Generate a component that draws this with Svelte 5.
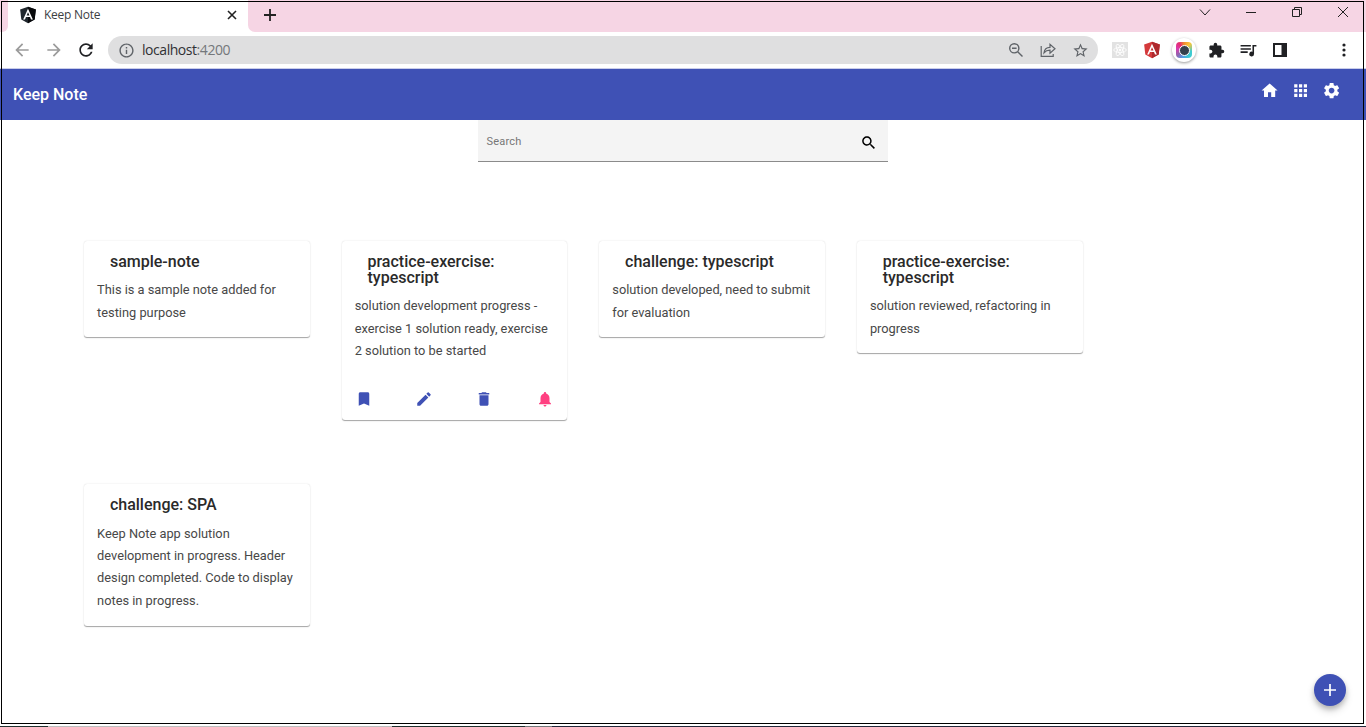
<script>
  const notes = [
    { title: 'sample-note', text: 'This is a sample note added for testing purpose' },
    {
      title: 'practice-exercise: typescript',
      text: 'solution development progress - exercise 1 solution ready, exercise 2 solution to be started',
      active: true,
    },
    { title: 'challenge: typescript', text: 'solution developed, need to submit for evaluation' },
    { title: 'practice-exercise: typescript', text: 'solution reviewed, refactoring in progress' },
    {
      title: 'challenge: SPA',
      text: 'Keep Note app solution development in progress. Header design completed. Code to display notes in progress.',
    },
  ];
  const paths = {
    bookmark: 'M17 3H7c-1.1 0-1.99.9-1.99 2L5 21l7-3 7 3V5c0-1.1-.9-2-2-2z',
    edit: 'M3 17.25V21h3.75L17.81 9.94l-3.75-3.75L3 17.25zM20.71 7.04a1 1 0 0 0 0-1.41l-2.34-2.34a1 1 0 0 0-1.41 0l-1.83 1.83 3.75 3.75 1.83-1.83z',
    remove: 'M6 19c0 1.1.9 2 2 2h8c1.1 0 2-.9 2-2V7H6v12zM19 4h-3.5l-1-1h-5l-1 1H5v2h14V4z',
    bell: 'M12 22c1.1 0 2-.9 2-2h-4c0 1.1.89 2 2 2zm6-6v-5c0-3.07-1.64-5.64-4.5-6.32V4c0-.83-.67-1.5-1.5-1.5s-1.5.67-1.5 1.5v.68C7.63 5.36 6 7.92 6 11v5l-2 2v1h16v-1l-2-2z',
    home: 'M10 20v-6h4v6h5v-8h3L12 3 2 12h3v8z',
    apps: 'M4 8h4V4H4v4zm6 12h4v-4h-4v4zm-6 0h4v-4H4v4zm0-6h4v-4H4v4zm6 0h4v-4h-4v4zm6-10v4h4V4h-4zm-6 4h4V4h-4v4zm6 6h4v-4h-4v4zm0 6h4v-4h-4v4z',
    settings:
      'M19.14 12.94c.04-.3.06-.61.06-.94 0-.32-.02-.64-.07-.94l2.03-1.58c.18-.14.23-.41.12-.61l-1.92-3.32c-.12-.22-.37-.29-.59-.22l-2.39.96c-.5-.38-1.03-.7-1.62-.94l-.36-2.54c-.04-.24-.24-.41-.48-.41h-3.84c-.24 0-.43.17-.47.41l-.36 2.54c-.59.24-1.13.57-1.62.94l-2.39-.96c-.22-.08-.47 0-.59.22L2.74 8.87c-.12.21-.08.47.12.61l2.03 1.58c-.05.3-.09.63-.09.94s.02.64.07.94l-2.03 1.58c-.18.14-.23.41-.12.61l1.92 3.32c.12.22.37.29.59.22l2.39-.96c.5.38 1.03.7 1.62.94l.36 2.54c.05.24.24.41.48.41h3.84c.24 0 .44-.17.47-.41l.36-2.54c.59-.24 1.13-.56 1.62-.94l2.39.96c.22.08.47 0 .59-.22l1.92-3.32c.12-.22.07-.47-.12-.61l-2.01-1.58zM12 15.6c-1.98 0-3.6-1.62-3.6-3.6s1.62-3.6 3.6-3.6 3.6 1.62 3.6 3.6-1.62 3.6-3.6 3.6z',
    search:
      'M15.5 14h-.79l-.28-.27C15.41 12.59 16 11.11 16 9.5 16 5.91 13.09 3 9.5 3S3 5.91 3 9.5 5.91 16 9.5 16c1.61 0 3.09-.59 4.23-1.57l.27.28v.79l5 4.99L20.49 19l-4.99-5zm-6 0C7.01 14 5 11.99 5 9.5S7.01 5 9.5 5 14 7.01 14 9.5 11.99 14 9.5 14z',
    back: 'M20 11H7.83l5.59-5.59L12 4l-8 8 8 8 1.41-1.41L7.83 13H20v-2z',
    forward: 'M12 4l-1.41 1.41L16.17 11H4v2h12.17l-5.58 5.59L12 20l8-8z',
    reload:
      'M17.65 6.35C16.2 4.9 14.21 4 12 4c-4.42 0-7.99 3.58-7.99 8s3.57 8 7.99 8c3.73 0 6.84-2.55 7.73-6h-2.08c-.82 2.33-3.04 4-5.65 4-3.31 0-6-2.69-6-6s2.69-6 6-6c1.66 0 3.14.69 4.22 1.78L13 11h7V4l-2.35 2.35z',
    info: 'M11 7h2v2h-2zm0 4h2v6h-2zm1-9C6.48 2 2 6.48 2 12s4.48 10 10 10 10-4.48 10-10S17.52 2 12 2zm0 18c-4.41 0-8-3.59-8-8s3.59-8 8-8 8 3.59 8 8-3.59 8-8 8z',
    star: 'M22 9.24l-7.19-.62L12 2 9.19 8.63 2 9.24l5.46 4.73L5.82 21 12 17.27 18.18 21l-1.63-7.03L22 9.24zM12 15.4l-3.76 2.27 1-4.28-3.32-2.88 4.38-.38L12 6.1l1.71 4.04 4.38.38-3.32 2.88 1 4.28L12 15.4z',
    puzzle:
      'M20.5 11H19V7c0-1.1-.9-2-2-2h-4V3.5a2.5 2.5 0 0 0-5 0V5H4c-1.1 0-1.99.9-1.99 2v3.8H3.5c1.49 0 2.7 1.21 2.7 2.7s-1.21 2.7-2.7 2.7H2V20c0 1.1.9 2 2 2h3.8v-1.5c0-1.49 1.21-2.7 2.7-2.7s2.7 1.21 2.7 2.7V22H17c1.1 0 2-.9 2-2v-4h1.5a2.5 2.5 0 0 0 0-5z',
    queue: 'M2 5h13v2H2zm0 4h13v2H2zm0 4h9v2H2zM17 5h5v2h-3v9.5a3 3 0 1 1-2-2.8z',
  };
</script>

{#snippet icon(name, size)}
  <svg class="icon" width={size} height={size} viewBox="0 0 24 24" fill="currentColor" aria-hidden="true">
    <path d={paths[name]} />
  </svg>
{/snippet}

{#snippet shield(left, right, w)}
  <svg class="icon" width={w} height={w} viewBox="0 0 24 24" aria-hidden="true">
    <path d="M12 1L22.5 4.7L20.9 18L12 23L3.1 18L1.5 4.7Z" fill={left} />
    <path d="M12 1L22.5 4.7L20.9 18L12 23Z" fill={right} />
    <path d="M12 3.5L5.5 18H8L9.3 14.7H14.7L16 18H18.5ZM12 8.2L13.9 12.7H10.1Z" fill="#fff" fill-rule="evenodd" />
  </svg>
{/snippet}

<div class="screen">
  <div class="tabs">
    <div class="edge"></div>
    <div class="tab">
      {@render shield('#20272d', '#08090b', 18)}
      <span class="tab-title">Keep Note</span>
      <svg width="10" height="10" viewBox="0 0 10 10" stroke="#222" stroke-width="1.6"><path d="M1 1L9 9M9 1L1 9" /></svg>
    </div>
    <div class="rest">
      <svg width="12" height="12" viewBox="0 0 12 12" stroke="#222" stroke-width="1.8"><path d="M6 0V12M0 6H12" /></svg>
      <div class="window-controls">
        <svg width="12" height="12" viewBox="0 0 12 12"><path d="M1 3.5L6 9L11 3.5" /></svg>
        <svg width="12" height="12" viewBox="0 0 12 12"><path d="M1 6.5H11" /></svg>
        <svg width="12" height="12" viewBox="0 0 12 12"><path d="M1.5 3.5H8.5V10.5H1.5ZM3.5 3.5V1.5H10.5V8.5H8.5" /></svg>
        <svg width="12" height="12" viewBox="0 0 12 12"><path d="M1 1L11 11M11 1L1 11" /></svg>
      </div>
    </div>
  </div>

  <div class="toolbar">
    <span class="nav dim">{@render icon('back', 20)}</span>
    <span class="nav dim">{@render icon('forward', 20)}</span>
    <span class="nav">{@render icon('reload', 20)}</span>
    <div class="address">
      {@render icon('info', 17)}
      <span class="url">localhost<span>:4200</span></span>
      <div class="address-actions">
        <svg width="16" height="16" viewBox="0 0 16 16" fill="none" stroke="currentColor" stroke-width="1.4"><circle cx="6.3" cy="6.3" r="4.6" /><path d="M9.7 9.7L14.5 14.5M4 6.3H8.6" /></svg>
        <svg width="16" height="16" viewBox="0 0 16 16" fill="none" stroke="currentColor" stroke-width="1.2"><path d="M1.2 4V14.4H13.2V12M4 10.8C4.4 7.4 6.4 5.5 10 5.4V2.3L15 6.7L10 11.1V8.2C7.4 8.2 5.5 9 4 10.8Z" /></svg>
        {@render icon('star', 17)}
      </div>
    </div>
    <div class="extensions">
      <svg width="16" height="16" viewBox="0 0 16 16" fill="none" stroke="#fff" stroke-width=".8"><path d="M0 0H16V16H0Z" fill="#e2e2e2" stroke="none" /><ellipse cx="8" cy="8" rx="6.3" ry="2.5" /><ellipse cx="8" cy="8" rx="6.3" ry="2.5" transform="rotate(60 8 8)" /><ellipse cx="8" cy="8" rx="6.3" ry="2.5" transform="rotate(120 8 8)" /><circle cx="8" cy="8" r="1" fill="#fff" /></svg>
      {@render shield('#d4393b', '#ae292d', 18)}
      <div class="lens"><div class="spectrum"><i></i></div></div>
      {@render icon('puzzle', 17)}
      {@render icon('queue', 19)}
      <svg width="14" height="14" viewBox="0 0 14 14"><path d="M1 1H13V13H1Z" fill="none" stroke="#202124" stroke-width="2" /><path d="M8.5 1H13V13H8.5Z" fill="#202124" /></svg>
    </div>
    <svg class="more" width="4" height="14" viewBox="0 0 4 14" fill="#202124"><circle cx="2" cy="2" r="1.6" /><circle cx="2" cy="7" r="1.6" /><circle cx="2" cy="12" r="1.6" /></svg>
  </div>

  <header>
    <h1>Keep Note</h1>
    <nav>
      {@render icon('home', 19.2)}
      {@render icon('apps', 19.2)}
      {@render icon('settings', 19.2)}
    </nav>
  </header>

  <main>
    <div class="search">
      <span>Search</span>
      {@render icon('search', 17.5)}
    </div>
    <div class="notes">
      {#each notes as note}
        <article>
          <h2>{note.title}</h2>
          <p>{note.text}</p>
          {#if note.active}
            <div class="actions">
              {@render icon('bookmark', 18)}
              {@render icon('edit', 18)}
              {@render icon('remove', 18)}
              <span class="alert">{@render icon('bell', 18)}</span>
            </div>
          {/if}
        </article>
      {/each}
    </div>
  </main>
  <footer><i></i><b></b><i></i><b></b><i></i></footer>
  <div class="frame"></div>
  <button class="add" aria-label="Add note">
    <svg width="12" height="12" viewBox="0 0 12 12" stroke="#fff" stroke-width="1.7"><path d="M6 0V12M0 6H12" /></svg>
  </button>
</div>

<style>
  :global(body) { margin: 0; overflow: hidden; background: #fff; }
  .screen { position: relative; display: flex; flex-direction: column; width: 1366px; height: 727px; overflow: hidden; font-family: Roboto, sans-serif; color: #212121; }
  svg { display: block; flex: none; }
  .tabs { display: flex; height: 32px; background: #fff; }
  .edge { width: 8px; background: #f6d5e4; border-radius: 0 0 6px 0; }
  .tab { box-sizing: border-box; display: flex; align-items: center; width: 240px; height: 30px; padding: 0 11px; font: 12px 'Open Sans', sans-serif; color: #3c4043; }
  .tab-title { flex: 1; margin: -1px 0 0 7px; letter-spacing: -.25px; }
  .rest { display: flex; flex: 1; align-items: center; padding: 0 17px 2px 16px; background: #f6d5e4; border-radius: 0 0 0 7px; }
  .window-controls { display: flex; gap: 34px; margin: -6px 0 0 auto; fill: none; stroke: #222; stroke-width: 1; }
  .toolbar { box-sizing: border-box; display: flex; align-items: center; height: 37px; padding-left: 12px; border-bottom: 1px solid #c9cdea; color: #202124; }
  .nav { display: flex; width: 32px; }
  .dim { color: #9b9b9b; }
  .address { box-sizing: border-box; display: flex; align-items: center; width: 990px; height: 28px; padding: 0 9.5px; border-radius: 14px; background: #dfdfe0; color: #5f6368; }
  .url { margin: -1px 0 0 7.5px; font: 14px 'Open Sans', sans-serif; letter-spacing: -.45px; color: #303134; }
  .url span { color: #74777b; }
  .address-actions { display: flex; gap: 16px; margin-left: auto; }
  .extensions { display: flex; align-items: center; justify-content: space-between; width: 175px; margin-left: 14px; }
  .lens { display: grid; place-items: center; width: 24px; height: 24px; margin: 0 -3px; border-radius: 50%; box-shadow: 0 1px 3px #0006; }
  .spectrum { display: grid; place-items: center; width: 16px; height: 16px; border-radius: 4px; background: conic-gradient(#f08a2f, #fbc637 12%, #3ecbd1 28%, #3ecbd1 40%, #4da2e8 52%, #9561ac 65%, #d83bb0 78%, #e52d6f 90%, #f08a2f); }
  .spectrum i { width: 9px; height: 9px; border: 1px solid #fff; border-radius: 50%; background: #35404c; }
  .more { margin-left: 55px; }
  header { box-sizing: border-box; display: flex; justify-content: space-between; height: 51px; padding: 0 25px 0 13px; background: #3f51b5; color: #fff; }
  h1 { margin: 0; font-size: 16px; font-weight: 500; line-height: 51px; }
  nav { display: flex; gap: 11.8px; padding-top: 12px; }
  main { flex: 1; }
  .search { box-sizing: border-box; display: flex; align-items: center; justify-content: space-between; width: 410px; height: 42px; margin-left: 478px; padding: 2px 10.5px 0 8.5px; border-bottom: 1px solid #8b8b8b; background: #f4f4f4; font-size: 11px; color: #777; }
  .search span { letter-spacing: .2px; }
  .search .icon { margin-top: 2px; color: #000; }
  .notes { display: grid; grid-template-columns: repeat(4, 225.6px); column-gap: 32px; row-gap: 64.4px; align-items: start; margin: 79px 0 0 84.3px; }
  article { box-sizing: border-box; padding: 12.8px; border-radius: 3.2px; background: #fff; box-shadow: 0 1.6px .8px -.8px #0003, 0 .8px .8px #00000024, 0 .8px 2.4px #00000010; }
  h2 { margin: 0 12.8px 9.3px; font-size: 16px; font-weight: 500; line-height: 16px; color: #2a2a2a; }
  p { margin: 0 0 .7px; font-size: 12.8px; line-height: 22.4px; color: #484848; }
  .actions { display: flex; justify-content: space-between; margin: 27.3px 1px 0 .2px; color: #3f51b5; height: 17.7px; }
  .alert { color: #ff4081; }
  footer { display: flex; height: 1px; }
  footer i { width: 48px; background: #20312f; }
  footer b { width: 344px; background: #bdbdbd; }
  footer i:nth-child(3) { width: 133px; }
  footer b:nth-child(4) { width: 27px; background: #73787a; }
  footer i:last-child { flex: 1; background: #23283a; }
  .frame { position: absolute; left: 1px; top: 1px; width: 1361px; height: 721px; border: 1px solid #000; pointer-events: none; }
  .add { position: absolute; right: 20px; bottom: 21px; display: grid; place-items: center; width: 32px; height: 32px; padding: 0; border: 0; border-radius: 50%; background: #3f51b5; box-shadow: 0 3px 5px #0003, 0 5px 8px #00000024; }
</style>
